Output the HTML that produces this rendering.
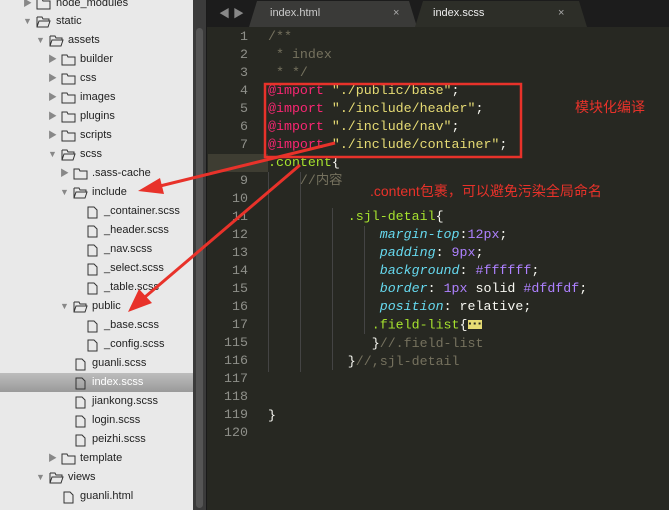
<!DOCTYPE html><html><head><meta charset="utf-8"><style>
*{margin:0;padding:0;box-sizing:border-box}
body{width:669px;height:510px;overflow:hidden;background:#272822;position:relative;font-family:"Liberation Sans","Noto Sans CJK SC",sans-serif}
#side{position:absolute;left:0;top:0;width:193px;height:510px;background:#e9e9e9}
#scroll{position:absolute;left:193px;top:0;width:14px;height:510px;background:#3b3b3b;border-right:1px solid #1a1a1a}
#scroll div{position:absolute;left:3px;top:28px;width:7px;height:480px;background:#555;border-radius:4px}
.r{position:absolute;height:19px;line-height:19px;font-size:11px;color:#222;white-space:nowrap;left:0;width:193px}
.r.sel{background:linear-gradient(#bdbdbd,#9a9a9a);color:#fff}
.tri{position:absolute;top:0;font-size:9px;color:#888}
.ic{position:absolute;top:4px}
#tabs{position:absolute;left:207px;top:0;width:462px;height:27px;background:#1c1c1c}
.tab{position:absolute;top:1px;height:26px;line-height:24px;font-size:11px;clip-path:polygon(0 100%,8px 0,calc(100% - 8px) 0,100% 100%)}
.tab b{position:absolute;font-weight:normal}
.tab span{position:absolute;color:#aaa}
#ln{position:absolute;left:207px;top:28px;width:41px;text-align:right;font-family:"Liberation Mono",monospace;font-size:13.3px;line-height:18px;color:#8f908a}
#code{position:absolute;left:268px;top:28px;font-family:"Liberation Mono",monospace;font-size:13.3px;line-height:18px;color:#f8f8f2;white-space:pre}
.c{color:#75715e}.k{color:#f92672}.s{color:#e6db74}.g{color:#a6e22e}.p{color:#66d9ef;font-style:italic}.n{color:#ae81ff}
</style></head><body>
<div id="side">
<div class="r" style="top:-6px"><span class="tri" style="left:23px">▶</span><svg class="ic" style="left:36px" width="15" height="12"><path d="M1 1h5l1 2h7v8H1z" fill="none" stroke="#333"/></svg><span style="position:absolute;left:56px">node_modules</span></div>
<div class="r" style="top:12px"><span class="tri" style="left:23px">▼</span><svg class="ic" style="left:36px" width="15" height="12"><path d="M1 1h5l1 2h6v2M1 1v10h11l2-6H3L1 11" fill="none" stroke="#333"/></svg><span style="position:absolute;left:56px">static</span></div>
<div class="r" style="top:31px"><span class="tri" style="left:36px">▼</span><svg class="ic" style="left:49px" width="15" height="12"><path d="M1 1h5l1 2h6v2M1 1v10h11l2-6H3L1 11" fill="none" stroke="#333"/></svg><span style="position:absolute;left:68px">assets</span></div>
<div class="r" style="top:50px"><span class="tri" style="left:48px">▶</span><svg class="ic" style="left:61px" width="15" height="12"><path d="M1 1h5l1 2h7v8H1z" fill="none" stroke="#333"/></svg><span style="position:absolute;left:80px">builder</span></div>
<div class="r" style="top:69px"><span class="tri" style="left:48px">▶</span><svg class="ic" style="left:61px" width="15" height="12"><path d="M1 1h5l1 2h7v8H1z" fill="none" stroke="#333"/></svg><span style="position:absolute;left:80px">css</span></div>
<div class="r" style="top:88px"><span class="tri" style="left:48px">▶</span><svg class="ic" style="left:61px" width="15" height="12"><path d="M1 1h5l1 2h7v8H1z" fill="none" stroke="#333"/></svg><span style="position:absolute;left:80px">images</span></div>
<div class="r" style="top:107px"><span class="tri" style="left:48px">▶</span><svg class="ic" style="left:61px" width="15" height="12"><path d="M1 1h5l1 2h7v8H1z" fill="none" stroke="#333"/></svg><span style="position:absolute;left:80px">plugins</span></div>
<div class="r" style="top:126px"><span class="tri" style="left:48px">▶</span><svg class="ic" style="left:61px" width="15" height="12"><path d="M1 1h5l1 2h7v8H1z" fill="none" stroke="#333"/></svg><span style="position:absolute;left:80px">scripts</span></div>
<div class="r" style="top:145px"><span class="tri" style="left:48px">▼</span><svg class="ic" style="left:61px" width="15" height="12"><path d="M1 1h5l1 2h6v2M1 1v10h11l2-6H3L1 11" fill="none" stroke="#333"/></svg><span style="position:absolute;left:80px">scss</span></div>
<div class="r" style="top:164px"><span class="tri" style="left:60px">▶</span><svg class="ic" style="left:73px" width="15" height="12"><path d="M1 1h5l1 2h7v8H1z" fill="none" stroke="#333"/></svg><span style="position:absolute;left:92px">.sass-cache</span></div>
<div class="r" style="top:183px"><span class="tri" style="left:60px">▼</span><svg class="ic" style="left:73px" width="15" height="12"><path d="M1 1h5l1 2h6v2M1 1v10h11l2-6H3L1 11" fill="none" stroke="#333"/></svg><span style="position:absolute;left:92px">include</span></div>
<div class="r" style="top:202px"><svg class="ic" style="left:87px" width="11" height="13"><path d="M1 1h6l3 3v8H1z" fill="none" stroke="#333"/></svg><span style="position:absolute;left:104px">_container.scss</span></div>
<div class="r" style="top:221px"><svg class="ic" style="left:87px" width="11" height="13"><path d="M1 1h6l3 3v8H1z" fill="none" stroke="#333"/></svg><span style="position:absolute;left:104px">_header.scss</span></div>
<div class="r" style="top:240px"><svg class="ic" style="left:87px" width="11" height="13"><path d="M1 1h6l3 3v8H1z" fill="none" stroke="#333"/></svg><span style="position:absolute;left:104px">_nav.scss</span></div>
<div class="r" style="top:259px"><svg class="ic" style="left:87px" width="11" height="13"><path d="M1 1h6l3 3v8H1z" fill="none" stroke="#333"/></svg><span style="position:absolute;left:104px">_select.scss</span></div>
<div class="r" style="top:278px"><svg class="ic" style="left:87px" width="11" height="13"><path d="M1 1h6l3 3v8H1z" fill="none" stroke="#333"/></svg><span style="position:absolute;left:104px">_table.scss</span></div>
<div class="r" style="top:297px"><span class="tri" style="left:60px">▼</span><svg class="ic" style="left:73px" width="15" height="12"><path d="M1 1h5l1 2h6v2M1 1v10h11l2-6H3L1 11" fill="none" stroke="#333"/></svg><span style="position:absolute;left:92px">public</span></div>
<div class="r" style="top:316px"><svg class="ic" style="left:87px" width="11" height="13"><path d="M1 1h6l3 3v8H1z" fill="none" stroke="#333"/></svg><span style="position:absolute;left:104px">_base.scss</span></div>
<div class="r" style="top:335px"><svg class="ic" style="left:87px" width="11" height="13"><path d="M1 1h6l3 3v8H1z" fill="none" stroke="#333"/></svg><span style="position:absolute;left:104px">_config.scss</span></div>
<div class="r" style="top:354px"><svg class="ic" style="left:75px" width="11" height="13"><path d="M1 1h6l3 3v8H1z" fill="none" stroke="#333"/></svg><span style="position:absolute;left:92px">guanli.scss</span></div>
<div class="r sel" style="top:373px"><svg class="ic" style="left:75px" width="11" height="13"><path d="M1 1h6l3 3v8H1z" fill="none" stroke="#333"/></svg><span style="position:absolute;left:92px">index.scss</span></div>
<div class="r" style="top:392px"><svg class="ic" style="left:75px" width="11" height="13"><path d="M1 1h6l3 3v8H1z" fill="none" stroke="#333"/></svg><span style="position:absolute;left:92px">jiankong.scss</span></div>
<div class="r" style="top:411px"><svg class="ic" style="left:75px" width="11" height="13"><path d="M1 1h6l3 3v8H1z" fill="none" stroke="#333"/></svg><span style="position:absolute;left:92px">login.scss</span></div>
<div class="r" style="top:430px"><svg class="ic" style="left:75px" width="11" height="13"><path d="M1 1h6l3 3v8H1z" fill="none" stroke="#333"/></svg><span style="position:absolute;left:92px">peizhi.scss</span></div>
<div class="r" style="top:449px"><span class="tri" style="left:48px">▶</span><svg class="ic" style="left:61px" width="15" height="12"><path d="M1 1h5l1 2h7v8H1z" fill="none" stroke="#333"/></svg><span style="position:absolute;left:80px">template</span></div>
<div class="r" style="top:468px"><span class="tri" style="left:36px">▼</span><svg class="ic" style="left:49px" width="15" height="12"><path d="M1 1h5l1 2h6v2M1 1v10h11l2-6H3L1 11" fill="none" stroke="#333"/></svg><span style="position:absolute;left:68px">views</span></div>
<div class="r" style="top:487px"><svg class="ic" style="left:63px" width="11" height="13"><path d="M1 1h6l3 3v8H1z" fill="none" stroke="#333"/></svg><span style="position:absolute;left:80px">guanli.html</span></div>
</div>
<div id="scroll"><div></div></div>
<div id="tabs">
<span style="position:absolute;left:12px;top:5px;color:#888;font-size:11px">◀ ▶</span>
<div class="tab" style="left:42px;width:168px;background:#3a3a38;color:#ccc"><b style="left:21px">index.html</b><span style="left:144px">×</span></div>
<div class="tab" style="left:208px;width:172px;background:#2d2e28;color:#eee"><b style="left:18px">index.scss</b><span style="left:143px">×</span></div>
</div>
<div id="ln">1<br>2<br>3<br>4<br>5<br>6<br>7<br>8<br>9<br>10<br>11<br>12<br>13<br>14<br>15<br>16<br>17<br>115<br>116<br>117<br>118<br>119<br>120</div>
<div style="position:absolute;left:208px;top:154px;width:60px;height:18px;background:#3e3d32"></div>
<svg style="position:absolute;left:268px;top:172px" width="140" height="200"><g stroke="#444" stroke-width="1"><line x1="0.5" y1="0" x2="0.5" y2="200"/><line x1="32.5" y1="0" x2="32.5" y2="200"/><line x1="64.5" y1="36" x2="64.5" y2="198"/><line x1="96.5" y1="54" x2="96.5" y2="162"/></g></svg>
<div id="code"><span class="c">/**
 * index
 * */</span>
<span class="k">@import</span> <span class="s">"./public/base"</span>;
<span class="k">@import</span> <span class="s">"./include/header"</span>;
<span class="k">@import</span> <span class="s">"./include/nav"</span>;
<span class="k">@import</span> <span class="s">"./include/container"</span>;
<span class="g">.content</span>{
    <span class="c">//内容</span>

          <span class="g">.sjl-detail</span>{
              <span class="p">margin-top</span>:<span class="n">12px</span>;
              <span class="p">padding</span>: <span class="n">9px</span>;
              <span class="p">background</span>: <span class="n">#ffffff</span>;
              <span class="p">border</span>: <span class="n">1px</span> solid <span class="n">#dfdfdf</span>;
              <span class="p">position</span>: relative;
             <span class="g">.field-list</span>{<span style="background:#e6db74;color:#272822;font-size:8px;vertical-align:middle">▪▪▪</span>
             }<span class="c">//.field-list</span>
          }<span class="c">//,sjl-detail</span>


}
</div>
<div style="position:absolute;left:575px;top:97px;color:#e8322a;font-size:14px">模块化编译</div>
<div style="position:absolute;left:370px;top:181px;color:#e8322a;font-size:14px">.content包裹，可以避免污染全局命名</div>
<svg style="position:absolute;left:0;top:0" width="669" height="510">
<rect x="265" y="84" width="256" height="73" fill="none" stroke="#e8322a" stroke-width="2.5"/>
<g stroke="#e8322a" stroke-width="3" fill="#e8322a">
<line x1="335" y1="143" x2="160" y2="186"/>
<polygon points="138,191 160,178 164,194" stroke="none"/>
<line x1="300" y1="165" x2="145" y2="297"/>
<polygon points="128,312 139,289 152,303" stroke="none"/>
</g></svg>
</body></html>
